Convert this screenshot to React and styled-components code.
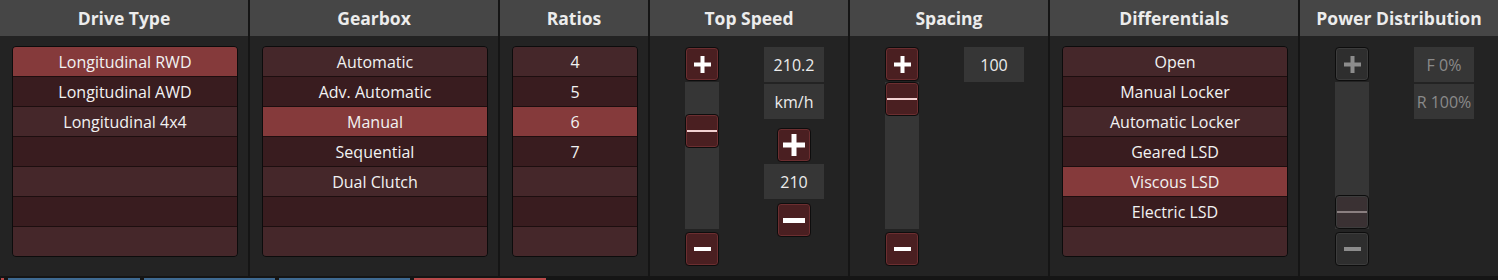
import React from 'react'
import styled, { createGlobalStyle, css } from 'styled-components'

const GlobalStyle = createGlobalStyle`
  html, body {
    margin: 0;
    padding: 0;
    background: #232323;
  }
  body {
    font-family: "Open Sans", "Noto Sans", sans-serif;
  }
`

const Screen = styled.div`
  width: 1498px;
  height: 280px;
  display: flex;
  flex-direction: column;
  background: #232323;
  overflow: hidden;
`

const Panel = styled.div`
  display: flex;
  height: 276px;
`

const Column = styled.div`
  width: ${props => props.width}px;
  flex-shrink: 0;
  display: flex;
  flex-direction: column;
  border-right: ${props => (props.last ? 'none' : '2px solid #151515')};
  box-sizing: border-box;
`

const Title = styled.div`
  height: 36px;
  display: flex;
  align-items: center;
  justify-content: center;
  background: #464646;
  color: #ececec;
  font-size: 17.5px;
  font-weight: 700;
`

const ListBody = styled.div`
  flex: 1;
  padding: 10px 10px 0 12px;
`

const List = styled.div`
  border: 1px solid #0c0c0c;
  border-radius: 4px;
  overflow: hidden;
`

const Row = styled.div`
  height: 29px;
  display: flex;
  align-items: center;
  justify-content: center;
  color: #f2f2f2;
  font-size: 16px;
  border-bottom: 1px solid #1d0e0f;
  background: ${props =>
    props.selected ? '#853a3b' : props.odd ? '#45272a' : '#391c1f'};
  &:last-child {
    border-bottom: none;
  }
`

const ControlBody = styled.div`
  flex: 1;
  display: flex;
  align-items: flex-start;
  gap: 45px;
  padding: 11px 0 0 35px;
`

const SliderStack = styled.div`
  width: 34px;
  display: flex;
  flex-direction: column;
`

const Track = styled.div`
  position: relative;
  height: 147px;
  margin: 1px 0 3px;
  background: #363636;
`

const buttonSkin = css`
  box-sizing: border-box;
  border-radius: 4px;
  border: 1px solid #0d0d0d;
  box-shadow: inset 0 0 0 1px ${props => (props.disabled ? '#3c3c3c' : '#6c2e30')};
  background: ${props => (props.disabled ? '#2e2e2e' : '#4a1f21')};
`

const StepButton = styled.div`
  ${buttonSkin}
  width: 34px;
  height: 34px;
  display: flex;
  align-items: center;
  justify-content: center;
  color: ${props => (props.disabled ? '#8c8c8c' : '#ffffff')};
`

const Thumb = styled.div`
  ${buttonSkin}
  position: absolute;
  left: 0;
  width: 34px;
  height: 34px;
  top: ${props => props.$pos * 113}px;
  background: ${props => (props.disabled ? '#3a3133' : '#4a1f21')};
  &::after {
    content: '';
    position: absolute;
    left: 1px;
    right: 1px;
    top: 15px;
    height: 2px;
    background: ${props => (props.disabled ? '#8a7f80' : '#f3d2d2')};
  }
`

const ReadoutStack = styled.div`
  width: 60px;
  display: flex;
  flex-direction: column;
  align-items: center;
`

const Readout = styled.div`
  width: 60px;
  height: 35px;
  margin-bottom: ${props => props.gap || 0}px;
  display: flex;
  align-items: center;
  justify-content: center;
  background: #363636;
  color: ${props => (props.disabled ? '#8a8a8a' : '#ececec')};
  font-size: 16px;
`

const Spacer = styled.div`
  height: ${props => props.h}px;
`

const Footer = styled.div`
  height: 4px;
  display: flex;
  gap: 4px;
  align-items: flex-end;
  background: #151515;
  padding-left: 1px;
`

const Tab = styled.div`
  width: ${props => props.width}px;
  height: 2px;
  background: ${props => (props.red ? '#b84a4a' : '#3e6991')};
`

const Plus = ({ big }) => {
  const s = big ? 22 : 17
  const t = big ? 5 : 4
  return (
    <svg width={s} height={s} viewBox={`0 0 ${s} ${s}`}>
      <rect x={0} y={(s - t) / 2} width={s} height={t} fill="currentColor" />
      <rect x={(s - t) / 2} y={0} width={t} height={s} fill="currentColor" />
    </svg>
  )
}

const Minus = ({ big }) => {
  const s = big ? 22 : 17
  const t = big ? 5 : 4
  return (
    <svg width={s} height={t} viewBox={`0 0 ${s} ${t}`}>
      <rect x={0} y={0} width={s} height={t} fill="currentColor" />
    </svg>
  )
}

const Slider = ({ pos, disabled }) => (
  <SliderStack>
    <StepButton disabled={disabled}>
      <Plus />
    </StepButton>
    <Track>
      <Thumb $pos={pos} disabled={disabled} />
    </Track>
    <StepButton disabled={disabled}>
      <Minus />
    </StepButton>
  </SliderStack>
)

const SelectList = ({ title, width, items, selected }) => {
  const rows = Array.from({ length: 7 }, (_, i) => items[i] || '')
  return (
    <Column width={width}>
      <Title>{title}</Title>
      <ListBody>
        <List>
          {rows.map((label, i) => (
            <Row key={i} odd={i % 2 === 0} selected={i === selected}>
              {label}
            </Row>
          ))}
        </List>
      </ListBody>
    </Column>
  )
}

const App = () => {
  return (
    <Screen>
      <GlobalStyle />
      <Panel>
        <SelectList
          title="Drive Type"
          width={250}
          items={['Longitudinal RWD', 'Longitudinal AWD', 'Longitudinal 4x4']}
          selected={0}
        />
        <SelectList
          title="Gearbox"
          width={250}
          items={['Automatic', 'Adv. Automatic', 'Manual', 'Sequential', 'Dual Clutch']}
          selected={2}
        />
        <SelectList title="Ratios" width={150} items={['4', '5', '6', '7']} selected={2} />

        <Column width={200}>
          <Title>Top Speed</Title>
          <ControlBody>
            <Slider pos={0.28} />
            <ReadoutStack>
              <Readout gap={2}>210.2</Readout>
              <Readout gap={9}>km/h</Readout>
              <StepButton>
                <Plus big />
              </StepButton>
              <Spacer h={2} />
              <Readout gap={4}>210</Readout>
              <StepButton>
                <Minus big />
              </StepButton>
            </ReadoutStack>
          </ControlBody>
        </Column>

        <Column width={200}>
          <Title>Spacing</Title>
          <ControlBody>
            <Slider pos={0} />
            <ReadoutStack>
              <Readout>100</Readout>
            </ReadoutStack>
          </ControlBody>
        </Column>

        <SelectList
          title="Differentials"
          width={250}
          items={[
            'Open',
            'Manual Locker',
            'Automatic Locker',
            'Geared LSD',
            'Viscous LSD',
            'Electric LSD',
          ]}
          selected={4}
        />

        <Column width={198} last>
          <Title>Power Distribution</Title>
          <ControlBody>
            <Slider pos={1} disabled />
            <ReadoutStack>
              <Readout gap={2} disabled>F 0%</Readout>
              <Readout disabled>R 100%</Readout>
            </ReadoutStack>
          </ControlBody>
        </Column>
      </Panel>
      <Footer>
        <Tab width={3} red />
        <Tab width={132} />
        <Tab width={131} />
        <Tab width={131} />
        <Tab width={132} red />
      </Footer>
    </Screen>
  )
}

export default App
